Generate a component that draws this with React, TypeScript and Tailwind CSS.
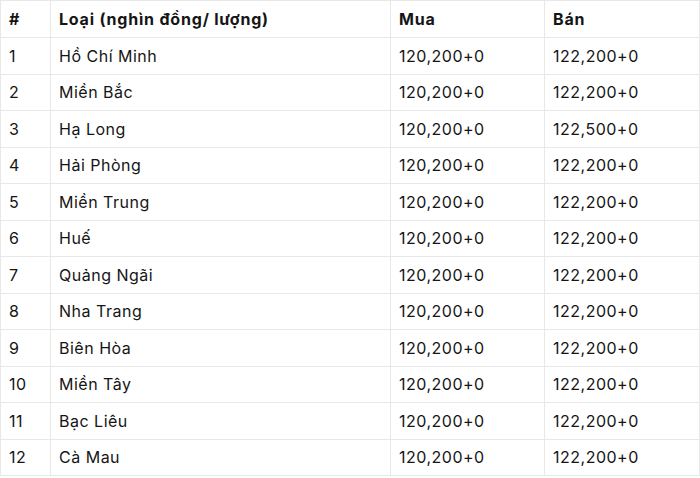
import React from "react";

const rows: [string, string, string, string][] = [
  ["1", "Hồ Chí Minh", "120,200+0", "122,200+0"],
  ["2", "Miền Bắc", "120,200+0", "122,200+0"],
  ["3", "Hạ Long", "120,200+0", "122,500+0"],
  ["4", "Hải Phòng", "120,200+0", "122,200+0"],
  ["5", "Miền Trung", "120,200+0", "122,200+0"],
  ["6", "Huế", "120,200+0", "122,200+0"],
  ["7", "Quảng Ngãi", "120,200+0", "122,200+0"],
  ["8", "Nha Trang", "120,200+0", "122,200+0"],
  ["9", "Biên Hòa", "120,200+0", "122,200+0"],
  ["10", "Miền Tây", "120,200+0", "122,200+0"],
  ["11", "Bạc Liêu", "120,200+0", "122,200+0"],
  ["12", "Cà Mau", "120,200+0", "122,200+0"],
];

export default function App() {
  return (
    <div className="w-[700px] h-[478px] bg-white" style={{ fontFamily: "Inter, 'Noto Sans', sans-serif" }}>
      <table className="w-[699px] border-collapse text-[16px] text-[#151515] table-fixed">
        <colgroup>
          <col className="w-[50px]" />
          <col className="w-[340px]" />
          <col className="w-[154px]" />
          <col className="w-[155px]" />
        </colgroup>
        <thead>
          <tr className="h-[37px]">
            {["#", "Loại (nghìn đồng/ lượng)", "Mua", "Bán"].map((h) => (
              <th key={h} className="border border-[#e8e8e8] pl-2 pr-2 text-left font-bold tracking-[0.8px] align-middle">
                {h}
              </th>
            ))}
          </tr>
        </thead>
        <tbody>
          {rows.map((r) => (
            <tr key={r[0]} className="h-[36.5px]">
              {r.map((c, i) => (
                <td key={i} className="border border-[#e8e8e8] pl-2 pr-2 align-middle font-normal tracking-[0.5px]">
                  {c}
                </td>
              ))}
            </tr>
          ))}
        </tbody>
      </table>
    </div>
  );
}
